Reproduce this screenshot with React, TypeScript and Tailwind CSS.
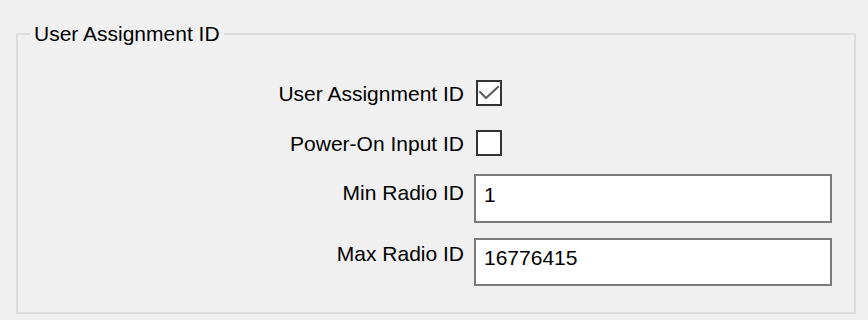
import { useState } from "react";

function CheckBox({ checked }: { checked: boolean }) {
  return (
    <div className="ml-[2px] w-[26px] h-[26px] border-2 border-[#333333] bg-white flex items-center justify-center">
      {checked && (
        <svg width="22" height="22" viewBox="0 0 22 22" fill="none">
          <path
            d="M2 10 L8 16 L20 5"
            stroke="#5c5c5c"
            strokeWidth="2"
            strokeLinecap="square"
          />
        </svg>
      )}
    </div>
  );
}

function App() {
  const [minId] = useState("1");
  const [maxId] = useState("16776415");

  return (
    <div className="w-[868px] h-[320px] bg-[#f0f0f0] text-black font-['Liberation_Sans',Arial,sans-serif] text-[21px] leading-[24px] overflow-hidden">
      {/* Group box */}
      <fieldset className="ml-[16px] mt-[21px] w-[840px] border-2 border-[#dcdcdc] px-[12px] pb-[26px]">
        <legend className="px-[4px] leading-[26px]">User Assignment ID</legend>

        <div className="flex flex-col pt-[33px]">
          {/* User Assignment ID */}
          <div className="flex items-start gap-[10px]">
            <div className="w-[434px] text-right mt-[2px]">User Assignment ID</div>
            <CheckBox checked />
          </div>

          {/* Power-On Input ID */}
          <div className="flex items-start gap-[10px] mt-[24px]">
            <div className="w-[434px] text-right mt-[2px]">Power-On Input ID</div>
            <CheckBox checked={false} />
          </div>

          {/* Min Radio ID */}
          <div className="flex items-start gap-[10px] mt-[18px]">
            <div className="w-[434px] text-right mt-[7px]">Min Radio ID</div>
            <input
              readOnly
              value={minId}
              className="w-[358px] h-[49px] border-2 border-[#7a7a7a] bg-white pl-[8px] pt-[7px] pb-[14px] leading-[24px] outline-none"
            />
          </div>

          {/* Max Radio ID */}
          <div className="flex items-start gap-[10px] mt-[15px]">
            <div className="w-[434px] text-right mt-[4px]">Max Radio ID</div>
            <input
              readOnly
              value={maxId}
              className="w-[358px] h-[48px] border-2 border-[#7a7a7a] bg-white pl-[8px] pt-[6px] pb-[14px] leading-[24px] outline-none"
            />
          </div>
        </div>
      </fieldset>
    </div>
  );
}

export default App;
